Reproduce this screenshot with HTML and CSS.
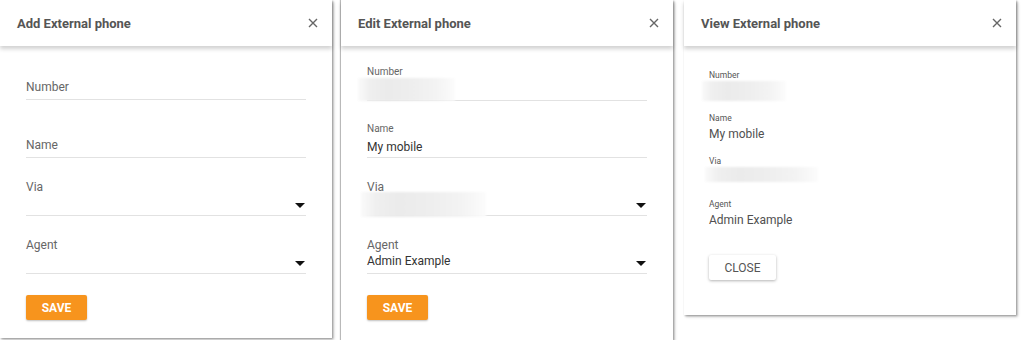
FILE: index.html
```html
<!DOCTYPE html>
<html lang="en">
<head>
  <meta charset="UTF-8" />
  <title>External phone dialogs</title>
  <link rel="stylesheet" href="styles.css">
</head>
<body>
  <div class="row">

    <!-- Add dialog -->
    <div class="dialog dialog-add">
      <div class="dialog-header">
        <span class="dialog-title">Add External phone</span>
        <svg class="close-icon" viewBox="0 0 10 10"><path d="M1 1L9 9M9 1L1 9" /></svg>
      </div>
      <div class="dialog-body">
        <div class="field">
          <div class="field-label"></div>
          <div class="field-input"><span class="placeholder">Number</span></div>
        </div>
        <div class="field">
          <div class="field-label"></div>
          <div class="field-input"><span class="placeholder">Name</span></div>
        </div>
        <div class="field">
          <div class="field-label">Via</div>
          <div class="field-input"><span class="arrow"></span></div>
        </div>
        <div class="field">
          <div class="field-label">Agent</div>
          <div class="field-input"><span class="arrow"></span></div>
        </div>
        <button class="btn-save">SAVE</button>
      </div>
    </div>

    <!-- Edit dialog -->
    <div class="dialog dialog-edit">
      <div class="dialog-header">
        <span class="dialog-title">Edit External phone</span>
        <svg class="close-icon" viewBox="0 0 10 10"><path d="M1 1L9 9M9 1L1 9" /></svg>
      </div>
      <div class="dialog-body">
        <div class="field field-first">
          <div class="field-label small">Number</div>
          <div class="field-input"><span class="redacted redacted-number"></span></div>
        </div>
        <div class="field">
          <div class="field-label small">Name</div>
          <div class="field-input"><span class="value value-low">My mobile</span></div>
        </div>
        <div class="field">
          <div class="field-label">Via</div>
          <div class="field-input"><span class="redacted redacted-via"></span><span class="arrow"></span></div>
        </div>
        <div class="field">
          <div class="field-label">Agent</div>
          <div class="field-input"><span class="value">Admin Example</span><span class="arrow"></span></div>
        </div>
        <button class="btn-save">SAVE</button>
      </div>
    </div>

    <!-- View dialog -->
    <div class="dialog dialog-view">
      <div class="dialog-header">
        <span class="dialog-title">View External phone</span>
        <svg class="close-icon" viewBox="0 0 10 10"><path d="M1 1L9 9M9 1L1 9" /></svg>
      </div>
      <div class="dialog-body view-body">
        <div class="entry entry-number">
          <div class="entry-label">Number</div>
          <div class="redacted redacted-view-number"></div>
        </div>
        <div class="entry">
          <div class="entry-label">Name</div>
          <div class="entry-value">My mobile</div>
        </div>
        <div class="entry entry-via">
          <div class="entry-label">Via</div>
          <div class="redacted redacted-view-via"></div>
        </div>
        <div class="entry entry-last">
          <div class="entry-label">Agent</div>
          <div class="entry-value">Admin Example</div>
        </div>
        <button class="btn-close">CLOSE</button>
      </div>
    </div>

  </div>
</body>
</html>
```

FILE: styles.css
```css
* {
  box-sizing: border-box;
}
body {
  margin: 0;
  background: #fff;
  font-family: Roboto, 'Liberation Sans', sans-serif;
  color: #444;
}

.row {
  display: flex;
  align-items: flex-start;
}

/* Dialog card */
.dialog {
  background: #fff;
  box-shadow: 1px 1px 2px rgba(0, 0, 0, 0.35), 2px 2px 3px rgba(0, 0, 0, 0.15);
}
.dialog-add {
  width: 332px;
  margin-right: 9px;
}
.dialog-edit {
  width: 332px;
  margin-right: 11px;
  box-shadow: -1px 0 1px rgba(0, 0, 0, 0.25), 1px 1px 2px rgba(0, 0, 0, 0.35), 2px 2px 3px rgba(0, 0, 0, 0.15);
}
.dialog-view {
  width: 332px;
}

/* Header */
.dialog-header {
  height: 46px;
  display: flex;
  align-items: center;
  justify-content: space-between;
  padding: 0 14px 0 17px;
  box-shadow: 0 3px 4px rgba(0, 0, 0, 0.18);
  position: relative;
}
.dialog-title {
  font-size: 13px;
  font-weight: 700;
  color: #555;
}
.close-icon {
  width: 10px;
  height: 10px;
  stroke: #666;
  stroke-width: 1.4;
  fill: none;
}

/* Form body */
.dialog-body {
  padding: 17px 26px 18px 26px;
}
.dialog-edit .dialog-body {
  padding-top: 18px;
  padding-bottom: 20px;
}

.field {
  border-bottom: 1px solid #e2e2e2;
  margin-bottom: 21px;
}
.dialog-edit .field-first {
  margin-bottom: 20px;
}
.field-label {
  height: 16px;
  line-height: 16px;
  font-size: 12px;
  color: #666;
}
.field-label.small {
  font-size: 10px;
}
.field-input {
  height: 20px;
  display: flex;
  align-items: flex-start;
  position: relative;
}
.placeholder {
  font-size: 12px;
  line-height: 16px;
  color: #666;
}
.value {
  font-size: 12px;
  line-height: 16px;
  color: #333;
}
.value-low {
  margin-top: 2px;
}
.arrow {
  margin-left: auto;
  margin-top: 8px;
  margin-right: 1px;
  width: 0;
  height: 0;
  border-left: 5px solid transparent;
  border-right: 5px solid transparent;
  border-top: 5px solid #111;
}

/* Blurred, redacted values */
.redacted {
  display: block;
  background: linear-gradient(90deg, #fafafa 0%, #efefef 12%, #ebebeb 30%, #eeeeee 55%, #f3f3f3 80%, #fcfcfc 100%);
  filter: blur(1px);
  position: relative;
}
.redacted-number {
  width: 97px;
  height: 23px;
  margin-left: -9px;
  margin-top: -2px;
}
.redacted-via {
  width: 125px;
  height: 25px;
  margin-left: -6px;
  margin-top: -3px;
}

/* Save button */
.btn-save {
  width: 61px;
  height: 25px;
  border: none;
  border-radius: 2px;
  background: #f7941d;
  color: #fff;
  font-family: Roboto, 'Liberation Sans', sans-serif;
  font-size: 12px;
  font-weight: 700;
  box-shadow: 0 1px 2px rgba(0, 0, 0, 0.25);
  padding: 0;
}

/* View body */
.view-body {
  padding: 23px 25px 35px 25px;
}
.entry {
  margin-bottom: 13px;
}
.entry-number {
  margin-bottom: 11px;
}
.entry-via {
  margin-bottom: 16px;
}
.entry-last {
  margin-bottom: 27px;
}
.entry-label {
  font-size: 8.5px;
  line-height: 12px;
  color: #555;
}
.entry-value {
  margin-top: 2px;
  font-size: 12px;
  line-height: 16px;
  color: #505050;
}
.redacted-view-number {
  width: 84px;
  height: 20px;
  margin-left: -7px;
}
.redacted-view-via {
  width: 113px;
  height: 15px;
  margin-left: -4px;
}
.btn-close {
  width: 67px;
  height: 25px;
  border: none;
  border-radius: 2px;
  background: #fff;
  color: #555;
  font-family: Roboto, 'Liberation Sans', sans-serif;
  font-size: 12px;
  box-shadow: 0 1px 3px rgba(0, 0, 0, 0.3);
  padding: 0;
}
```
